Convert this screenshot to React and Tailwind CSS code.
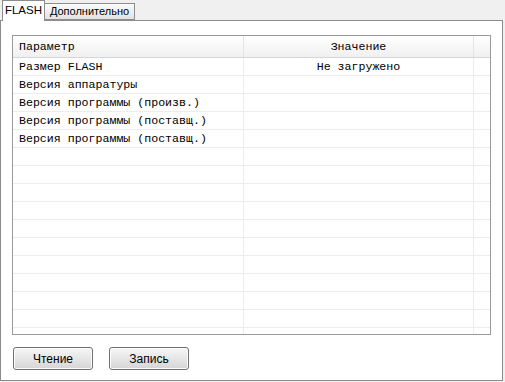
import React from 'react';

const rows = [
  ['Размер FLASH', 'Не загружено'],
  ['Версия аппаратуры', ''],
  ['Версия программы (произв.)', ''],
  ['Версия программы (поставщ.)', ''],
  ['Версия программы (поставщ.)', ''],
  ...Array.from({ length: 11 }, () => ['', '']),
];

const Button = ({ children }) => (
  <button className="w-[80px] h-[23px] rounded-[3px] border border-[#707070] bg-gradient-to-b from-[#f6f6f6] via-[#e6e6e6] to-[#d6d6d6] text-[12px] text-black font-['Liberation_Sans',sans-serif] shadow-[inset_0_0_0_1px_#fcfcfc]">
    {children}
  </button>
);

export default function App() {
  return (
    <div className="w-[505px] h-[382px] bg-[#f0f0f0] flex flex-col font-['Liberation_Sans',sans-serif] overflow-hidden">
      {/* tab strip */}
      <div className="flex items-end h-[20px] pl-[2px] relative z-10">
        <div className="h-[21px] w-[43px] mb-[-1px] bg-white border border-b-0 border-[#8c8c8c] flex items-center justify-center text-[11.5px] text-black">
          FLASH
        </div>
        <div className="h-[17px] w-[90px] bg-gradient-to-b from-[#fbfbfb] to-[#e2e2e2] border border-l-0 border-[#8c8c8c] flex items-center justify-center text-[11px] text-black">
          Дополнительно
        </div>
      </div>

      {/* panel */}
      <div className="flex-1 mr-[2px] mb-[1px] bg-white border border-[#8c8c8c] flex flex-col pl-[11px] pr-[11px] pt-[14px]">
        <div className="h-[300px] border border-[#999] flex flex-col overflow-hidden font-['Liberation_Mono',monospace] text-[11.6px] text-black">
          <div className="flex h-[22px] shrink-0 bg-gradient-to-b from-[#ffffff] to-[#f0f0f0] border-b border-[#d5d5d5]">
            <div className="w-[231px] border-r border-[#e3e3e3] flex items-center pl-[6px]">Параметр</div>
            <div className="w-[230px] border-r border-[#e3e3e3] flex items-center justify-center">Значение</div>
            <div className="flex-1" />
          </div>
          {rows.map((r, i) => (
            <div key={i} className="flex h-[18px] shrink-0 border-b border-[#ececec]">
              <div className="w-[231px] border-r border-[#ececec] flex items-center pl-[6px] pt-[1px] whitespace-pre">{r[0]}</div>
              <div className="w-[230px] border-r border-[#ececec] flex items-center justify-center pt-[1px] whitespace-pre">{r[1]}</div>
              <div className="flex-1" />
            </div>
          ))}
        </div>
        <div className="flex gap-[16px] mt-[12px] pl-[1px]">
          <Button>Чтение</Button>
          <Button>Запись</Button>
        </div>
      </div>
    </div>
  );
}
